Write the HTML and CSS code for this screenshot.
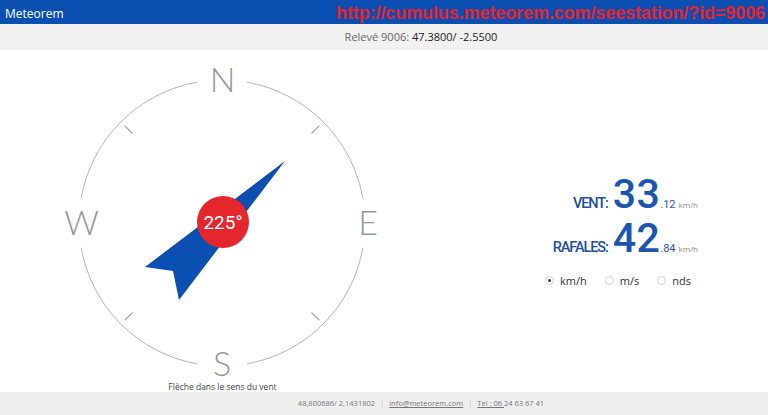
FILE: index.html
```html
<!DOCTYPE html>
<html lang="fr">
<head>
<meta charset="utf-8">
<title>Meteorem</title>
<link rel="stylesheet" href="styles.css">
</head>
<body>
<header class="topbar">
  <span class="brand">Meteorem</span>
  <span class="url">http://cumulus.meteorem.com/seestation/?id=9006</span>
</header>
<div class="subbar"><span class="lbl">Relevé 9006:</span> <span class="val">47.3800/ -2.5500</span></div>
<main class="main">
  <section class="compass-col">
    <svg class="compass" width="445" height="332" viewBox="0 0 445 332">
      <g fill="none" stroke="#b5b5b5" stroke-width="1">
        <path d="M246.83 32.17 A143 143 0 0 1 362.83 148.17"/>
        <path d="M362.83 197.83 A143 143 0 0 1 246.83 313.83"/>
        <path d="M197.17 313.83 A143 143 0 0 1 81.17 197.83"/>
        <path d="M81.17 148.17 A143 143 0 0 1 197.17 32.17"/>
      </g>
      <g stroke="#9a9a9a" stroke-width="1.2" stroke-linecap="round">
        <line x1="311.8" y1="83.2" x2="318.9" y2="76.1"/>
        <line x1="311.8" y1="262.8" x2="318.9" y2="269.9"/>
        <line x1="132.2" y1="262.8" x2="125.1" y2="269.9"/>
        <line x1="132.2" y1="83.2" x2="125.1" y2="76.1"/>
      </g>
      <g class="cardinal" text-anchor="middle">
        <text x="222.5" y="42">N</text>
        <text x="368" y="185">E</text>
        <text x="222" y="326">S</text>
        <text x="81.5" y="185">W</text>
      </g>
      <polygon points="285,111 145,217 173,221 179,250" fill="#0b4fb1"/>
      <circle cx="223" cy="172" r="26" fill="#e4262d"/>
      <text class="deg" x="223" y="179" text-anchor="middle">225°</text>
    </svg>
    <div class="caption">Flèche dans le sens du vent</div>
  </section>
  <section class="wind-col">
    <div class="wind-block">
      <div class="row"><span class="label">VENT:</span><span class="big">33</span><span class="dec">.12</span><span class="unit">km/h</span></div>
      <div class="row"><span class="label">RAFALES:</span><span class="big">42</span><span class="dec">.84</span><span class="unit">km/h</span></div>
      <div class="radios">
        <label class="radio"><span class="dot on"></span>km/h</label>
        <label class="radio"><span class="dot"></span>m/s</label>
        <label class="radio"><span class="dot"></span>nds</label>
      </div>
    </div>
  </section>
</main>
<footer class="footer">
  <span>48,800686/ 2,1431802</span><span class="sep">|</span><a class="lnk">info@meteorem.com</a><span class="sep">|</span><span><a class="lnk">Tel : 06 </a>24 63 67 41</span>
</footer>
</body>
</html>
```
FILE: styles.css
```css
* { box-sizing: border-box; }
html, body { margin: 0; padding: 0; }
body {
  width: 768px;
  height: 415px;
  overflow: hidden;
  background: #fff;
  font-family: "Open Sans", "Noto Sans", sans-serif;
  color: #333;
}
.topbar {
  position: relative;
  height: 24px;
  background: #0b4fb1;
  color: #fff;
  line-height: 24px;
  padding-left: 5px;
}
.brand { font-size: 12px; }
.url {
  position: absolute;
  right: 3px;
  top: 0;
  font-family: "Liberation Sans", Arial, sans-serif;
  font-weight: bold;
  font-size: 18px;
  line-height: 26px;
  color: #e4232c;
  letter-spacing: -0.1px;
}
.subbar {
  height: 26px;
  background: #f1f1f1;
  line-height: 26px;
  text-align: center;
  padding-left: 74px;
  font-size: 11px;
}
.subbar .lbl { color: #666; }
.subbar .val { color: #222; }
.main {
  display: flex;
  height: 342px;
}
.compass-col {
  width: 445px;
  display: flex;
  flex-direction: column;
}
.compass { display: block; overflow: visible; }
.cardinal text {
  font-family: "Lato", sans-serif;
  font-weight: 300;
  font-size: 34px;
  fill: #979797;
}
.deg {
  font-family: "Roboto", sans-serif;
  font-size: 19px;
  fill: #fff;
}
.caption {
  font-size: 8.5px;
  line-height: 10px;
  text-align: center;
  color: #444;
}
.wind-col {
  flex: 1;
  padding-top: 122px;
  padding-left: 100px;
}
.wind-block { width: 153px; }
.row {
  height: 44px;
  line-height: 44px;
  text-align: right;
  white-space: nowrap;
  color: #1a56b0;
}
.label {
  font-family: "Roboto", sans-serif;
  font-weight: 500;
  font-size: 14.5px;
  letter-spacing: -1.1px;
  color: #1d4f9e;
  margin-right: 5px;
}
.big {
  font-family: "Roboto", sans-serif;
  font-weight: 500;
  font-size: 41px;
  letter-spacing: 0.5px;
}
.dec {
  font-family: "Roboto", sans-serif;
  font-size: 11px;
  color: #1a56b0;
}
.unit {
  font-size: 8px;
  color: #888;
  margin-left: 3px;
}
.radios {
  margin-top: 10px;
  height: 20px;
  display: flex;
  align-items: center;
  gap: 18px;
  font-size: 11px;
  color: #333;
}
.radio {
  display: flex;
  align-items: center;
  gap: 6px;
}
.dot {
  width: 9px;
  height: 9px;
  border-radius: 50%;
  border: 1px solid #cfcfcf;
  background: #fff;
  position: relative;
}
.dot.on::after {
  content: "";
  position: absolute;
  left: 2px;
  top: 2px;
  width: 3px;
  height: 3px;
  border-radius: 50%;
  background: #333;
}
.footer {
  height: 23px;
  background: #efefef;
  line-height: 23px;
  text-align: center;
  padding-left: 74px;
  font-size: 7.5px;
  color: #777;
}
.sep { color: #bbb; margin: 0 5px; }
.lnk { color: #777; text-decoration: underline; }
```
